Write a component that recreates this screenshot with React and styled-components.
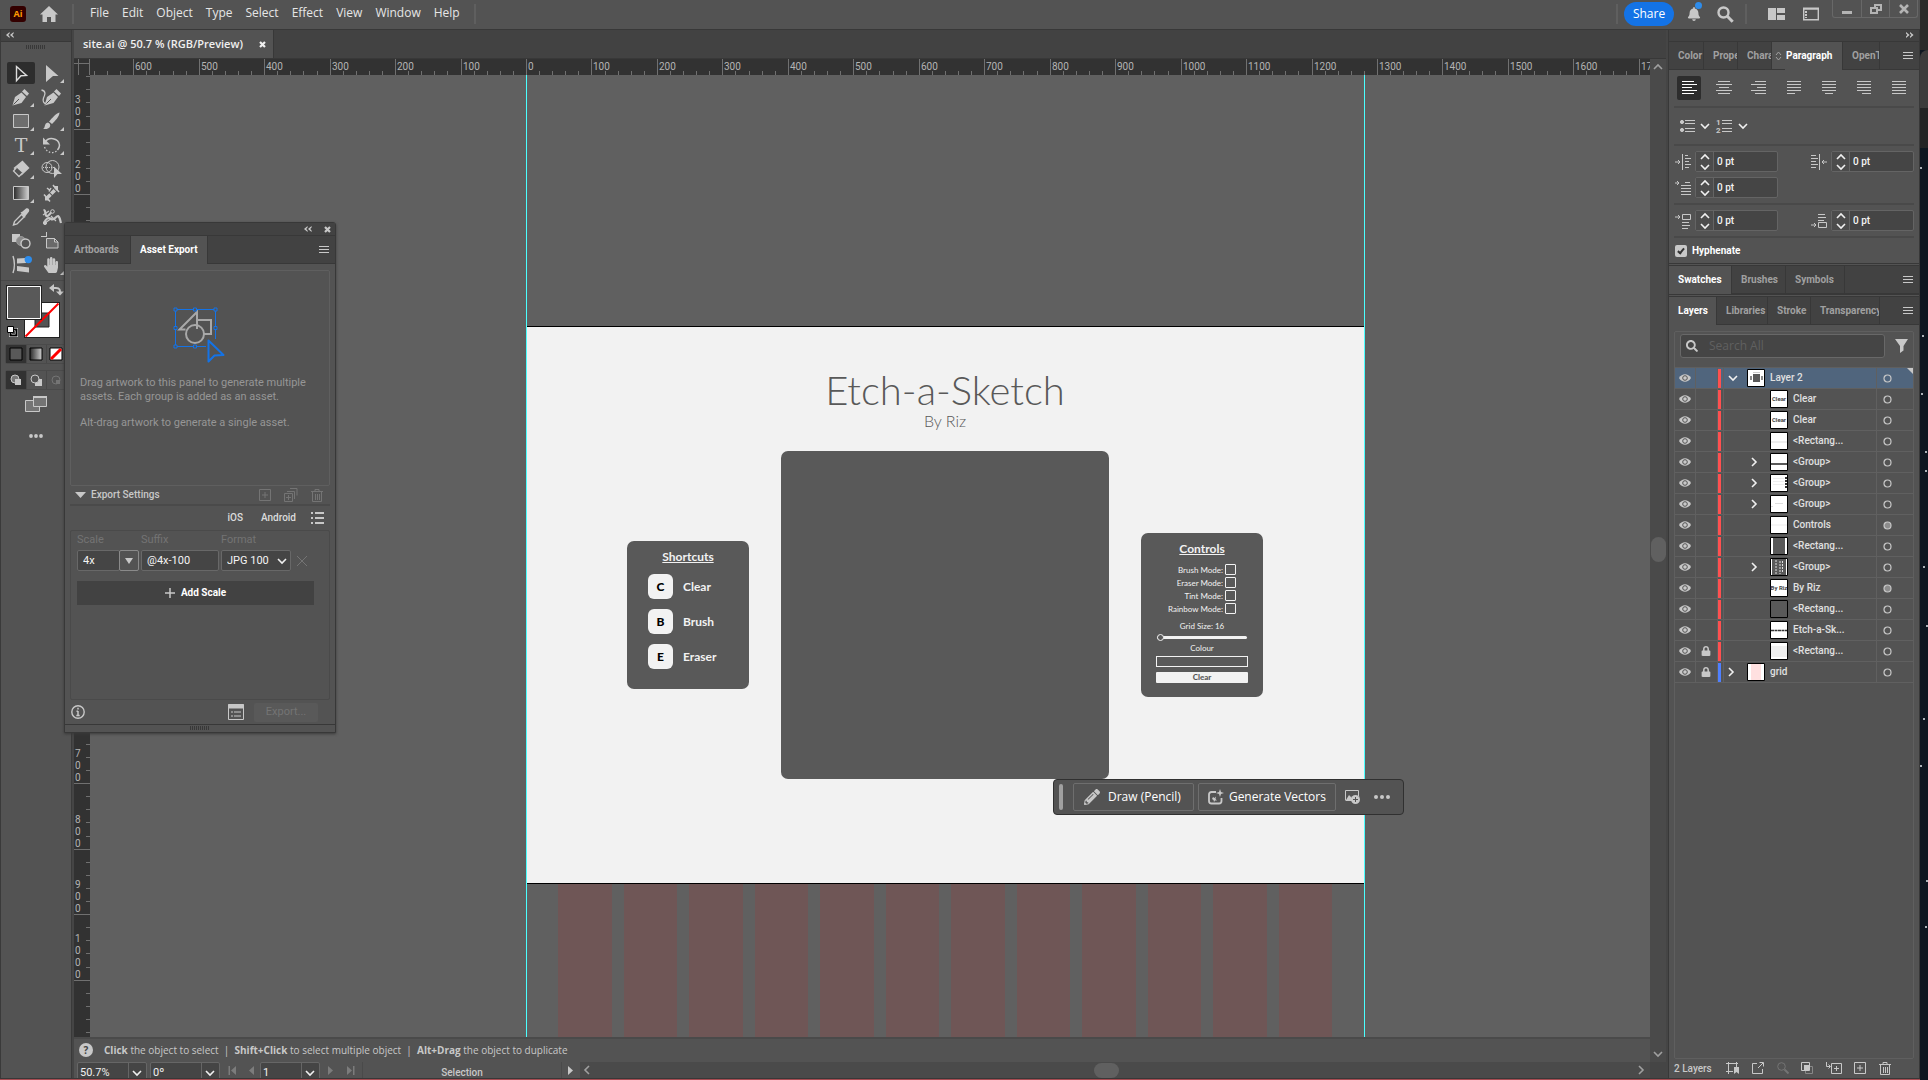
import React from 'react';
import styled, { createGlobalStyle, css } from 'styled-components';
import { FaBell, FaHandPaper, FaLock, FaPencilAlt, FaSearch } from 'react-icons/fa';

/* ---------- data ---------- */

const UNIT = 0.6546; // screen pixels per ruler unit at 50.7 %
const ORIGIN_X = 436;
const ORIGIN_Y = 251;

const menus = ['File', 'Edit', 'Object', 'Type', 'Select', 'Effect', 'View', 'Window', 'Help'];

const layers = [
    { name: 'Layer 2', depth: 0, open: true, selected: true, thumb: 'board' },
    { name: 'Clear', depth: 1, thumb: 'text', text: 'Clear' },
    { name: 'Clear', depth: 1, thumb: 'text', text: 'Clear' },
    { name: '<Rectang...', depth: 1, thumb: 'pale' },
    { name: '<Group>', depth: 1, group: true, thumb: 'slider' },
    { name: '<Group>', depth: 1, group: true, thumb: 'modes' },
    { name: '<Group>', depth: 1, group: true, thumb: 'faint' },
    { name: 'Controls', depth: 1, thumb: 'white', filled: true },
    { name: '<Rectang...', depth: 1, thumb: 'tall' },
    { name: '<Group>', depth: 1, group: true, thumb: 'keys' },
    { name: 'By Riz', depth: 1, thumb: 'text', text: 'By Riz', filled: true },
    { name: '<Rectang...', depth: 1, thumb: 'dark' },
    { name: 'Etch-a-Sk...', depth: 1, thumb: 'line' },
    { name: '<Rectang...', depth: 1, thumb: 'gray', locked: true },
    { name: 'grid', depth: 0, group: true, thumb: 'pink', locked: true, color: '#4f80ff' },
];

const alignments = [
    ['Align left', [[4, 16], [4, 19], [4, 14], [4, 19], [4, 16]]],
    ['Align center', [[6, 18], [4, 20], [7, 17], [4, 20], [6, 18]]],
    ['Align right', [[8, 19], [4, 19], [10, 19], [4, 19], [8, 19]]],
    ['Justify left', [[5, 19], [5, 19], [5, 19], [5, 19], [5, 13]]],
    ['Justify center', [[5, 19], [5, 19], [5, 19], [5, 19], [8, 16]]],
    ['Justify right', [[5, 19], [5, 19], [5, 19], [5, 19], [10, 19]]],
    ['Justify all', [[5, 19], [5, 19], [5, 19], [5, 19], [5, 19]]],
];

/* ---------- shared parts ---------- */

const GlobalStyle = createGlobalStyle`
    body {
        margin: 0;
        background: #0d1620;
        color: #dcdcdc;
        font-family: Roboto, "Open Sans", sans-serif;
        font-size: 11px;
        line-height: 14px;
    }
    *, *::before, *::after {
        box-sizing: border-box;
    }
    button, input, select {
        font: inherit;
        color: inherit;
        margin: 0;
        padding: 0;
        border: 0;
        background: none;
    }
    h1, h2, p, ul {
        margin: 0;
        padding: 0;
        font-weight: inherit;
        font-size: inherit;
        list-style: none;
    }
    svg {
        display: block;
        flex: none;
    }
`;

const Icon = ({ w = 16, h = 16, children, ...rest }) => (
    <svg width={w} height={h} viewBox={`0 0 ${w} ${h}`} fill="none" stroke="#c8c8c8" aria-hidden="true" {...rest}>
        {children}
    </svg>
);

const IconButton = styled.button`
    display: flex;
    align-items: center;
    justify-content: center;
    flex: none;
`;

const MenuLines = () => (
    <Icon w={10} h={8} shapeRendering="crispEdges">
        <path d="M0 .5h10M0 3.5h10M0 6.5h10" />
    </Icon>
);

const Chevron = ({ dir = 'down', color = '#f0f0f0' }) => {
    const d = { down: 'M1 3l4 4 4-4', up: 'M1 7l4-4 4 4', left: 'M7 1L3 5l4 4', right: 'M1 1l4 4-4 4' };
    return (
        <Icon w={10} h={10} stroke={color} strokeWidth="1.6">
            <path d={d[dir]} />
        </Icon>
    );
};

const Doubles = ({ right }) => (
    <Icon w={8} h={6} stroke="none" fill="#c8c8c8">
        {right
            ? <path d="M0 0l3.6 3L0 6V4.400l1.400-1.400L0 1.600zM4 0l3.600 3L4 6V4.400L5.400 3 4 1.600z" />
            : <path d="M3.600 0L0 3l3.600 3V4.400L2.200 3l1.400-1.400zM7.600 0L4 3l3.600 3V4.400L6.200 3l1.400-1.400z" />}
    </Icon>
);

const Grip = () => (
    <Icon w={20} h={4} stroke="#383838" shapeRendering="crispEdges">
        <path d="M.5 0v4M2.500 0v4M4.500 0v4M6.500 0v4M8.500 0v4M10.500 0v4M12.500 0v4M14.500 0v4M16.500 0v4M18.500 0v4" />
    </Icon>
);

/* ---------- frame ---------- */

const Screen = styled.div`
    display: flex;
    height: 100vh;
    overflow: hidden;
`;

const AppWindow = styled.div`
    position: relative;
    display: flex;
    flex-direction: column;
    flex: 1;
    min-width: 0;
    background: #535353;
    border-bottom: 1px solid #a84c52;
`;

const Desktop = styled.div`
    width: 8px;
    display: flex;
    flex-direction: column;
    background: #0d1620;
`;

const DesktopBand = styled.div`
    flex: none;
    height: ${({ $h }) => $h}px;
    background: ${({ $bg }) => $bg};
    border-top-left-radius: ${({ $round }) => ($round ? 8 : 0)}px;
`;

const Body = styled.div`
    flex: 1;
    min-height: 0;
    display: grid;
    grid-template-columns: 72px minmax(0, 1fr) 252px;
    column-gap: 2px;
    background: #454545;
    border-top: 1px solid #383838;
    border-bottom: 1px solid #383838;
`;

/* ---------- top bar ---------- */

const TopBar = styled.header`
    height: 29px;
    display: flex;
    align-items: center;
    padding: 0 0 1px 10px;
`;

const Logo = styled.span`
    width: 16px;
    height: 16px;
    border-radius: 3px;
    background: #330000;
    color: #ff9a00;
    font: 700 9px/16px "Open Sans", sans-serif;
    text-align: center;
    margin-right: 14px;
`;

const Rule = styled.span`
    width: 2px;
    height: 20px;
    background: #5f5f5f;
    margin: 0 ${({ $gap }) => $gap}px;
`;

const Menu = styled.nav`
    display: flex;
    gap: 13px;
    padding: 0 2px 2px;
    font: 12px/16px "Open Sans", sans-serif;
    color: #e6e6e6;
`;

const Spacer = styled.span`
    flex: 1;
`;

const Share = styled.button`
    width: 50px;
    height: 24px;
    border-radius: 12px;
    background: #1473e6;
    color: #fff;
    font: 12px/24px "Open Sans", sans-serif;
    text-align: center;
`;

const BellButton = styled(IconButton)`
    position: relative;
    width: 16px;
    margin: 0 15px 0 12px;
    color: #c8c8c8;
    font-size: 14px;

    &::after {
        content: '';
        position: absolute;
        top: -5px;
        right: 0;
        width: 7px;
        height: 7px;
        border-radius: 50%;
        background: #2d8ceb;
    }
`;

const WindowButtons = styled.div`
    align-self: flex-start;
    display: flex;
    height: 18px;
    margin: 0 2px 0 5px;
    border: 1px solid #686868;
    border-top: 0;
    border-radius: 0 0 3px 3px;
`;

const WindowButton = styled(IconButton)`
    width: 28px;

    & + & {
        border-left: 1px solid #686868;
    }
`;

const TopHeader = () => (
    <TopBar>
        <Logo>Ai</Logo>
        <IconButton aria-label="Home">
            <Icon w={18} h={16} stroke="none" fill="#c8c8c8">
                <path d="M9 0l9 8.500h-2.500V16H11v-5H7v5H2.500V8.500H0z" />
            </Icon>
        </IconButton>
        <Rule $gap={14} />
        <Menu>
            {menus.map(m => <button key={m}>{m}</button>)}
        </Menu>
        <Rule $gap={12} />
        <Spacer />
        <Rule $gap={6} />
        <Share>Share</Share>
        <BellButton aria-label="Notifications"><FaBell /></BellButton>
        <IconButton aria-label="Search">
            <Icon w={17} h={17} strokeWidth="2.400">
                <circle cx="6.500" cy="6.500" r="5" />
                <path d="M10.300 10.300l5.400 5.400" strokeWidth="3" />
            </Icon>
        </IconButton>
        <Rule $gap={11} />
        <IconButton aria-label="Arrange documents">
            <Icon w={37} h={12} stroke="none" fill="#c8c8c8">
                <path d="M10 0h8v12h-8zM19 0h8v5h-8zM19 7h8v5h-8z" />
            </Icon>
        </IconButton>
        <IconButton aria-label="Switch workspace">
            <Icon w={32} h={14}>
                <path d="M8.700 1.700h14.600v11H8.700z" strokeWidth="1.400" />
                <path d="M8 1.500h16" strokeWidth="2" />
                <path d="M11 4v7" strokeWidth="2" strokeDasharray="2 1" />
            </Icon>
        </IconButton>
        <WindowButtons>
            <WindowButton aria-label="Minimize">
                <Icon w={10} h={12} stroke="#b4b4b4" strokeWidth="3"><path d="M0 9.500h10" /></Icon>
            </WindowButton>
            <WindowButton aria-label="Restore">
                <Icon w={12} h={12} stroke="#b4b4b4" strokeWidth="2">
                    <path d="M5 5V2h6v5H8M1 5h6v5H1z" />
                </Icon>
            </WindowButton>
            <WindowButton aria-label="Close">
                <Icon w={10} h={10} stroke="#b4b4b4" strokeWidth="2.600"><path d="M1 1l8 8M9 1L1 9" /></Icon>
            </WindowButton>
        </WindowButtons>
    </TopBar>
);

/* ---------- toolbar ---------- */

const Toolbar = styled.aside`
    display: flex;
    flex-direction: column;
    background: #535353;
    border: 1px solid #3a3a3a;
    border-width: 0 1px;
`;

const PaneHead = styled.div`
    height: 12px;
    display: flex;
    align-items: center;
    justify-content: ${({ $end }) => ($end ? 'flex-end' : 'flex-start')};
    padding: 0 5px 1px 5px;
    background: #424242;
    border-bottom: 1px solid #383838;
    flex: none;
`;

const GripRow = styled.div`
    display: flex;
    justify-content: center;
    padding: 3px 0 13px;
`;

const ToolGrid = styled.div`
    display: grid;
    grid-template-columns: 28px 28px;
    gap: 2px;
    padding: 0 6px 4px;
`;

const Tool = styled.button`
    height: 22px;
    border-radius: 2px;
    background: ${({ $active }) => ($active ? '#2d2d2d' : 'none')};
`;

const g = '#c8c8c8';
const corner = <path d="M27 17v4h-4z" fill={g} stroke="none" />;
const nib = (
    <g stroke="none" fill={g}>
        <path d="M5.500 19.500L8 11l6.500-4.500 4.500 4.500-4.500 6z" />
        <path d="M15 5.500L17.500 3l4.500 4.500-2 2.500z" />
        <path d="M6.500 18.500l5.500-5.500" stroke="#535353" />
    </g>
);

const tools = [
    ['Selection', <path d="M9.500 4.500l10 9-5.500.3-4.500 5z" strokeWidth="1.400" stroke="#dcdcdc" />],
    ['Direct selection', <><path d="M9 3l12.500 11H16l-7 6z" fill={g} stroke="none" />{corner}</>],
    ['Pen', <>{nib}{corner}</>],
    ['Curvature', <><g transform="translate(2)">{nib}</g><path d="M4.500 4c5 1 3.500 5 2 8-1 3 0 6 3 5.500" strokeWidth="1.300" /></>],
    ['Rectangle', <><path d="M6.500 4.500h15v13h-15z" fill="#6e6e6e" />{corner}</>],
    ['Paintbrush', <><g fill={g} stroke="none"><path d="M22.500 2.500c0 4-4.500 8.500-7.500 11.500l-3-2.500c3-3.500 7-8 10.500-9z" /><path d="M6 19c2.500-1 1-6 5-6.500 4 1.500 3 7.500-5 6.500z" /></g>{corner}</>],
    ['Type', <><text x="14" y="18" textAnchor="middle" fontFamily="DejaVu Serif, serif" fontSize="19" fill={g} stroke="none">T</text>{corner}</>],
    ['Rotate', <><path d="M8 8.500c3-6 13.500-5 14.500 2.500 0 2-.5 3.500-2 5" strokeWidth="1.500" /><path d="M19.500 17c-4 3-9.500 2-12-4" strokeDasharray="1.500 1.800" strokeWidth="1.300" /><path d="M6 3.500v7h7z" fill={g} stroke="none" />{corner}</>],
    ['Eraser', <><path d="M15.500 2.500l7 7.500-8 7.500-8-7.500z" fill={g} stroke="none" /><path d="M9.500 9.500l-3 3.500 5.500 5.500 3.500-3.500" strokeWidth="1.300" fill="#535353" />{corner}</>],
    ['Shape builder', <><circle cx="10" cy="9.500" r="5" /><circle cx="15.500" cy="9" r="6.500" /><path d="M6 9.500h12" strokeDasharray="1 1" /><path d="M17 8.500l8 7.500h-4.500l-3.500 4z" fill={g} stroke="none" /></>],
    ['Gradient', <><defs><linearGradient id="toolGradient"><stop stopColor="#2a2a2a" /><stop offset="1" stopColor="#d0d0d0" /></linearGradient></defs><path d="M6.500 4.500h15v13h-15z" fill="url(#toolGradient)" />{corner}</>],
    ['Width', <><path d="M10 16l9-9" strokeWidth="3.500" strokeDasharray="5 1" /><path d="M7 12.500l6 7M16 3l6 7" strokeWidth="1.500" /><path d="M8 18.500v-5l5 5zM21 4v5l-5-5z" fill={g} stroke="none" /><path d="M10 6l2.500 2M12 9.500l2-3.500" strokeWidth="1.500" /></>],
    ['Eyedropper', <><path d="M6.500 19l1-3.500 7-7 2.500 2.500-7 7z" strokeWidth="1.400" /><path d="M13.500 6.500l2-1 3.500-3c2-1 4 1 3 3L18.500 10l-.5 2z" fill={g} stroke="none" /></>],
    ['Puppet warp', <><path d="M6.500 4c3 0 1 5 3 6 3 1 3-4 7-5M7 17c2-5 5-6 7-4 3 2 5-3 7-3 2 1 2 4 3 7" strokeWidth="2.200" /><path d="M8 17l7-5M6 9l6-4M14 10l5 5" strokeWidth="1.200" /><circle cx="15.500" cy="5.500" r="1.800" fill="#535353" /><circle cx="8" cy="17" r="1.600" fill={g} /></>],
    ['Blend', <><path d="M5 4h8v8H5z" fill={g} stroke="none" /><circle cx="14" cy="11" r="4.500" fill="#8a8a8a" stroke="#9a9a9a" /><circle cx="18.500" cy="13.500" r="4.500" fill="#535353" strokeWidth="1.400" /></>],
    ['Artboard', <path d="M4 6.500h5M9.500 2v5M9.500 8.500h8l3.500 3.500v6H9.500zM17.500 8.500V12h3.500" fill="#6a6a6a" />],
    ['Intertwine', <><path d="M6 2c2 6 2 11 0 17" strokeWidth="1.400" /><path d="M10 4.500l9-.5v5l-9 .5zM10 12l12 1.500v5L10 17z" fill={g} stroke="none" /><circle cx="21.300" cy="5.600" r="3.700" fill="#2d8ceb" stroke="none" /></>],
    ['Hand', <><FaHandPaper x="6" y="3" size={16} color={g} />{corner}</>],
];

const SwatchArea = styled.div`
    border-top: 1px solid #484848;
    padding: 4px 0 0 6px;
`;

const ModeRow = styled.div`
    display: flex;
    margin: 6px 0 0 4px;
    border: 1px solid #4a4a4a;
    border-right: 0;
    border-radius: 3px;
`;

const Mode = styled.button`
    width: 20px;
    height: 18px;
    display: flex;
    align-items: center;
    justify-content: center;
    background: ${({ $active }) => ($active ? '#323232' : 'none')};

    & + & {
        border-left: 1px solid #484848;
        padding-right: 2px;
    }
`;

const ToolFooter = styled.div`
    display: flex;
    flex-direction: column;
    align-items: center;
    gap: 22px;
    padding-top: 6px;
`;

const Tools = () => (
    <Toolbar>
        <PaneHead><Doubles /></PaneHead>
        <GripRow><Grip /></GripRow>
        <ToolGrid>
            {tools.map(([name, art], i) => (
                <Tool key={name} aria-label={name} $active={i === 0}>
                    <Icon w={28} h={22}>{art}</Icon>
                </Tool>
            ))}
        </ToolGrid>
        <SwatchArea>
            <Icon w={58} h={53} stroke="none" overflow="visible">
                <path d="M17 17h36v36H17z" fill="#222" />
                <path d="M18 18h34v34H18zM28 28v14h14V28z" fill="#fff" fillRule="evenodd" />
                <path d="M28 28h14v14H28z" fill="#535353" stroke="#222" />
                <path d="M18.500 51.500l33-33" stroke="#f00" strokeWidth="2" />
                <path d="M-1 0h36v35H-1z" fill="#222" />
                <path d="M.5 1.500h33v32H.5z" fill="#595959" stroke="#fff" />
                <path d="M45 3h4c4 0 4 2 4 5" stroke={g} strokeWidth="2" />
                <path d="M42 3l5-4v8zM49 6.500h8l-4 4z" fill={g} />
                <path d="M3.500 44.500h6v6h-6z" fill="#535353" stroke="#fff" strokeWidth="3" />
                <path d="M3.500 44.500h6v6h-6z" stroke="#000" strokeWidth="2" />
                <path d="M.5 41.500h6v6h-6z" fill="#fff" stroke="#000" />
            </Icon>
        </SwatchArea>
        <ModeRow>
            <Mode aria-label="Color" $active>
                <Icon w={14} h={14}><path d="M1 1h12v12H1z" fill="#595959" stroke="#000" /></Icon>
            </Mode>
            <Mode aria-label="Gradient fill">
                <Icon w={14} h={14}><path d="M1 1h12v12H1z" fill="url(#toolGradient)" stroke="#000" /></Icon>
            </Mode>
            <Mode aria-label="None">
                <Icon w={14} h={14}>
                    <path d="M1 1h12v12H1z" fill="#fff" stroke="#000" />
                    <path d="M2 12L12 2" stroke="#f00" strokeWidth="3" />
                </Icon>
            </Mode>
        </ModeRow>
        <ModeRow>
            <Mode aria-label="Draw normal" $active>
                <Icon w={14} h={14}><circle cx="6" cy="6" r="4" fill="#777" /><path d="M6 6h6v6H6z" fill={g} stroke="none" /></Icon>
            </Mode>
            <Mode aria-label="Draw behind">
                <Icon w={14} h={14}><path d="M6 6h7v7H6z" fill={g} stroke="none" /><circle cx="6" cy="6" r="4" fill="#535353" /></Icon>
            </Mode>
            <Mode aria-label="Draw inside">
                <Icon w={14} h={14} stroke="#747474"><circle cx="7" cy="7" r="4" /><path d="M7 7h4v4H7z" fill="#747474" stroke="none" /></Icon>
            </Mode>
        </ModeRow>
        <ToolFooter>
            <IconButton aria-label="Screen mode">
                <Icon w={22} h={16}>
                    <path d="M.5 4.500h14v11H.5z" fill="#747474" />
                    <path d="M8.500.5h13v10h-13z" fill="#747474" />
                    <path d="M8 1h14" strokeWidth="2" />
                </Icon>
            </IconButton>
            <IconButton aria-label="Edit toolbar">
                <Icon w={14} h={4} stroke="none" fill={g}>
                    <circle cx="2" cy="2" r="1.900" /><circle cx="7" cy="2" r="1.900" /><circle cx="12" cy="2" r="1.900" />
                </Icon>
            </IconButton>
        </ToolFooter>
    </Toolbar>
);

/* ---------- document ---------- */

const Doc = styled.main`
    display: grid;
    grid-template: 29px 16px minmax(0, 1fr) 25px 16px / 16px minmax(0, 1fr) 16px;
    min-width: 0;
    min-height: 0;
`;

const DocTabs = styled.div`
    grid-column: 1 / -1;
    background: #424242;
    border-bottom: 1px solid #383838;
    display: flex;
`;

const DocTab = styled.div`
    display: flex;
    align-items: center;
    gap: 16px;
    padding: 0 7px 0 9px;
    background: #535353;
    border-right: 1px solid #383838;
    color: #f0f0f0;
    font-family: "Open Sans", sans-serif;
    font-weight: 600;
`;

const RulerBox = styled.div`
    background: #323232;
    overflow: hidden;
    min-width: 0;
    min-height: 0;

    text {
        fill: #b4b4b4;
        stroke: none;
        font-size: 10px;
    }
`;

const range = (from, to) => Array.from({ length: to - from + 1 }, (_, i) => from + i);

const TopRuler = () => (
    <RulerBox>
        <svg width="100%" height="16" stroke="#707070" shapeRendering="crispEdges">
            {range(-33, 140).map(i => {
                const x = Math.round(ORIGIN_X + i * 20 * UNIT) + 0.5;
                return <path key={i} d={`M${x} ${i % 5 ? 12 : 0}V16`} />;
            })}
            {range(-6, 17).map(i => (
                <text key={i} x={Math.round(ORIGIN_X + i * 100 * UNIT) + 2} y="11">{Math.abs(i * 100)}</text>
            ))}
        </svg>
    </RulerBox>
);

const SideRuler = () => (
    <RulerBox>
        <svg width="16" height="100%" stroke="#707070" shapeRendering="crispEdges">
            {range(-19, 70).map(i => {
                const y = Math.round(ORIGIN_Y + i * 20 * UNIT) - 0.5;
                return <path key={i} d={`M${i % 5 ? 12 : 0} ${y}H16`} />;
            })}
            {range(-3, 10).map(i => {
                const digits = String(Math.abs(i * 100)).split('');
                const y = Math.round(ORIGIN_Y + i * 100 * UNIT) - 3;
                return digits.map((d, n) => (
                    <text key={`${i}-${n}`} x="1" y={y - (digits.length - 1 - n) * 12}>{d}</text>
                ));
            })}
        </svg>
    </RulerBox>
);

const Canvas = styled.div`
    position: relative;
    overflow: hidden;
    background: #606060;
`;

const Guide = styled.span`
    position: absolute;
    top: 0;
    bottom: 0;
    left: ${({ $x }) => $x}px;
    width: 1px;
    background: #4affff;
`;

const GridColumns = styled.div`
    position: absolute;
    top: 809px;
    bottom: 0;
    left: 436px;
    width: 838px;
    padding: 0 32px;
    display: grid;
    grid-template-columns: repeat(12, 1fr);
    column-gap: 12px;

    span {
        background: #6f5656;
    }
`;

const Artboard = styled.section`
    position: absolute;
    top: 251px;
    left: 436px;
    width: 838px;
    height: 558px;
    padding-top: 41px;
    background: #f2f2f2;
    border: 1px solid #000;
    border-width: 1px 0;
    color: #595959;
    font-family: Lato, "Open Sans", sans-serif;
    text-align: center;
`;

const ArtTitle = styled.h1`
    font-size: 40px;
    font-weight: 300;
    line-height: 44px;
`;

const ArtAuthor = styled.p`
    font-size: 16px;
    font-weight: 300;
    line-height: 18px;
`;

const ArtRow = styled.div`
    display: flex;
    align-items: center;
    justify-content: center;
    gap: 32px;
    margin-top: 21px;
`;

const Pad = styled.div`
    width: 328px;
    height: 328px;
    border-radius: 7px;
    background: #595959;
`;

const Card = styled.div`
    width: 122px;
    height: ${({ $tall }) => ($tall ? 164 : 148)}px;
    padding: 9px 15px;
    border-radius: 7px;
    background: #595959;
    color: #f2f2f2;
`;

const CardTitle = styled.h2`
    font-size: 12px;
    line-height: 14px;
    font-weight: 700;
    text-decoration: underline;
`;

const Shortcut = styled.p`
    display: flex;
    align-items: center;
    gap: 10px;
    margin: 10px 0 0 6px;
    font-size: 12px;
    font-weight: 700;
`;

const Key = styled.kbd`
    width: 25px;
    border-radius: 6px;
    background: #f2f2f2;
    color: #000;
    font: 900 12px/25px Lato, sans-serif;
    text-align: center;
`;

const ModeList = styled.div`
    display: flex;
    flex-direction: column;
    align-items: flex-end;
    margin: 7px 12px 6px 0;
    font-size: 8px;
`;

const ModeLabel = styled.label`
    display: flex;
    align-items: center;
    gap: 2px;
    height: 13px;
    white-space: nowrap;
`;

const ArtCheck = styled.input`
    appearance: none;
    width: 11px;
    height: 11px;
    border: 1px solid #f2f2f2;
    border-radius: 1px;
`;

const ArtLabel = styled.label`
    display: block;
    font-size: 8px;
    line-height: 10px;
`;

const ArtSlider = styled.input`
    appearance: none;
    display: block;
    width: 90px;
    height: 7px;
    margin: 3px 1px 2px;

    &::-webkit-slider-runnable-track {
        height: 3px;
        border-radius: 2px;
        background: #f2f2f2;
    }
    &::-webkit-slider-thumb {
        appearance: none;
        width: 7px;
        height: 7px;
        margin-top: -2px;
        border: 1px solid #f2f2f2;
        border-radius: 50%;
        background: #595959;
    }
`;

const ArtField = styled.input`
    display: block;
    width: 100%;
    height: 11px;
    margin: 3px 0 5px;
    border: 1px solid #f2f2f2;
`;

const ArtButton = styled.button`
    display: block;
    width: 100%;
    border-radius: 1px;
    background: #f2f2f2;
    color: #595959;
    font-size: 8px;
    line-height: 11px;
    font-weight: 900;
`;

const Artwork = () => (
    <Artboard>
        <ArtTitle>Etch-a-Sketch</ArtTitle>
        <ArtAuthor>By Riz</ArtAuthor>
        <ArtRow>
            <Card>
                <CardTitle>Shortcuts</CardTitle>
                <Shortcut><Key>C</Key>Clear</Shortcut>
                <Shortcut><Key>B</Key>Brush</Shortcut>
                <Shortcut><Key>E</Key>Eraser</Shortcut>
            </Card>
            <Pad />
            <Card $tall>
                <CardTitle>Controls</CardTitle>
                <ModeList>
                    {['Brush', 'Eraser', 'Tint', 'Rainbow'].map(m => (
                        <ModeLabel key={m}>{m} Mode:<ArtCheck type="checkbox" /></ModeLabel>
                    ))}
                </ModeList>
                <ArtLabel htmlFor="gridSize">Grid Size: 16</ArtLabel>
                <ArtSlider id="gridSize" type="range" min="16" max="100" defaultValue="16" />
                <ArtLabel htmlFor="colour">Colour</ArtLabel>
                <ArtField id="colour" type="text" />
                <ArtButton>Clear</ArtButton>
            </Card>
        </ArtRow>
    </Artboard>
);

const ContextBar = styled.div`
    position: absolute;
    top: 704px;
    left: 963px;
    display: flex;
    align-items: center;
    height: 36px;
    padding: 0 12px 0 5px;
    border: 1px solid #303030;
    border-radius: 4px;
    background: #535353;
    font: 12px/16px "Open Sans", sans-serif;
    color: #fff;

    &::before {
        content: '';
        width: 4px;
        height: 26px;
        margin-right: 10px;
        border-radius: 2px;
        background: #a0a0a0;
    }
`;

const ContextButton = styled.button`
    display: flex;
    align-items: center;
    gap: ${({ $tight }) => ($tight ? 5 : 8)}px;
    height: 28px;
    padding: 0 ${({ $tight }) => ($tight ? 9 : 12)}px 0 ${({ $tight }) => ($tight ? 9 : 10)}px;
    margin-right: 4px;
    border: 1px solid #6e6e6e;
    border-radius: 2px;

    svg {
        color: #c8c8c8;
    }
`;

const VScroll = styled.div`
    grid-row: 2 / 5;
    grid-column: 3;
    display: flex;
    flex-direction: column;
    align-items: center;
    justify-content: space-between;
    padding: 3px 0;
    background: #4a4a4a;
`;

const VThumbShift = styled.span`
    padding-bottom: 23px;
`;

const Thumb = styled.span`
    width: ${({ $w }) => $w}px;
    height: ${({ $h }) => $h}px;
    border-radius: 8px;
    background: #606060;
`;

const Status = styled.p`
    grid-column: 1 / 3;
    display: flex;
    align-items: center;
    padding: 0 0 1px 5px;
    border-top: 2px solid #4a4a4a;
    background: #535353;
    color: #c8c8c8;
    font-family: "Open Sans", sans-serif;
    font-size: 10px;
    font-weight: 500;
    white-space: pre;
`;

const Help = styled.span`
    width: 14px;
    height: 14px;
    margin-right: 11px;
    border-radius: 50%;
    background: #c8c8c8;
    color: #444;
    font-weight: 700;
    text-align: center;
`;

const BottomBar = styled.div`
    grid-column: 1 / 3;
    display: flex;
    overflow: hidden;
    padding-left: 3px;
    background: #535353;
`;

const Combo = styled.label`
    flex: none;
    display: flex;
    height: 21px;
    width: ${({ $w }) => $w}px;
    margin-right: ${({ $gap }) => $gap}px;
    border: 1px solid #666;
    border-radius: 2px;
    background: #454545;
    color: #f0f0f0;

    input {
        flex: 1;
        min-width: 0;
        padding-left: 2px;
    }
    button {
        width: 18px;
        padding-left: 3px;
        border-left: 1px solid #666;
    }
`;

const Step = styled(IconButton)`
    width: ${({ $w }) => $w}px;
`;

const StepIcon = ({ end, back }) => (
    <Icon w={8} h={9} stroke="none" fill="#7c7c7c">
        <g transform={back ? 'translate(8) scale(-1 1)' : undefined}>
            <path d="M0 0l5 4.500L0 9z" />
            {end && <path d="M6 0h1.500v9H6z" />}
        </g>
    </Icon>
);

const ToolName = styled.span`
    width: 200px;
    padding-top: 2px;
    border: 1px solid #4a4a4a;
    border-width: 0 1px;
    color: #c8c8c8;
    font-size: 10px;
    font-weight: 500;
    line-height: 18px;
    text-align: center;
`;

const HScroll = styled.div`
    flex: 1;
    display: flex;
    align-items: center;
    justify-content: space-between;
    padding: 0 2px;
    background: #4a4a4a;
`;

const ThumbShift = styled.span`
    padding-right: 18px;
`;

const Document = () => (
    <Doc>
        <DocTabs>
            <DocTab>
                site.ai @ 50.7 % (RGB/Preview)
                <IconButton aria-label="Close document">
                    <Icon w={7} h={7} strokeWidth="2.200" stroke="#f0f0f0"><path d="M1 1l5 5M6 1L1 6" /></Icon>
                </IconButton>
            </DocTab>
        </DocTabs>
        <RulerBox>
            <svg width="16" height="16" stroke="#707070" shapeRendering="crispEdges">
                <path d="M4.500 0v16M0 4.500h16" /><path d="M15.500 0v16" />
            </svg>
        </RulerBox>
        <TopRuler />
        <VScroll>
            <Chevron dir="up" color="#a0a0a0" />
            <VThumbShift><Thumb as="div" $w={15} $h={25} /></VThumbShift>
            <Chevron color="#a0a0a0" />
        </VScroll>
        <SideRuler />
        <Canvas>
            <Artwork />
            <GridColumns>{range(1, 12).map(i => <span key={i} />)}</GridColumns>
            <Guide $x={436} />
            <Guide $x={1274} />
            <ContextBar>
                <ContextButton><FaPencilAlt size={16} />Draw (Pencil)</ContextButton>
                <ContextButton $tight>
                    <Icon w={16} h={16} strokeWidth="1.800">
                        <path d="M8 3H3.500C2 3 1 4 1 5.500V12c0 1.500 1 2.500 2.500 2.500H11c1.500 0 2.500-1 2.500-2.500V9" />
                        <path d="M12 0l1 3 3 1-3 1-1 3-1-3-3-1 3-1zM5 8l1.500 1L8 7.500 7.500 10 9 11.500H7L6 13l-.5-2L4 10z" fill={g} stroke="none" />
                    </Icon>
                    Generate Vectors
                </ContextButton>
                <IconButton aria-label="Place image">
                    <Icon w={26} h={16}>
                        <path d="M5.500 11.500V1.500h13V7" />
                        <path d="M6 11l3-5 3 3 2-1-2 4H6z" fill={g} stroke="none" />
                        <circle cx="15.500" cy="10.500" r="4.500" fill={g} stroke="none" />
                        <path d="M15.500 8v5M13 10.500h5" stroke="#535353" />
                    </Icon>
                </IconButton>
                <IconButton aria-label="More options">
                    <Icon w={25} h={4} stroke="none" fill={g}>
                        <circle cx="10" cy="2" r="2" /><circle cx="16" cy="2" r="2" /><circle cx="22" cy="2" r="2" />
                    </Icon>
                </IconButton>
            </ContextBar>
        </Canvas>
        <Status>
            <Help>?</Help>
            <b>Click</b> the object to select  |  <b>Shift+Click</b> to select multiple object  |  <b>Alt+Drag</b> the object to duplicate
        </Status>
        <BottomBar>
            <Combo $w={70} $gap={3}>
                <input defaultValue="50.7%" aria-label="Zoom" />
                <button aria-label="Zoom list"><Chevron /></button>
            </Combo>
            <Combo $w={70} $gap={4}>
                <input defaultValue="0º" aria-label="Rotation" />
                <button aria-label="Rotation list"><Chevron /></button>
            </Combo>
            <Step $w={16} aria-label="First artboard"><StepIcon end back /></Step>
            <Step $w={20} aria-label="Previous artboard"><StepIcon back /></Step>
            <Combo $w={60} $gap={4}>
                <input defaultValue="1" aria-label="Artboard" />
                <button aria-label="Artboard list"><Chevron /></button>
            </Combo>
            <Step $w={16} aria-label="Next artboard"><StepIcon /></Step>
            <Step $w={22} aria-label="Last artboard"><StepIcon end /></Step>
            <ToolName>Selection</ToolName>
            <Step $w={18} aria-label="Status options">
                <Icon w={6} h={9} stroke="none" fill={g}><path d="M0 0l5 4.500L0 9z" /></Icon>
            </Step>
            <HScroll>
                <Chevron dir="left" color="#a0a0a0" />
                <ThumbShift><Thumb as="div" $w={25} $h={15} /></ThumbShift>
                <Chevron dir="right" color="#a0a0a0" />
            </HScroll>
        </BottomBar>
    </Doc>
);

/* ---------- tabbed panels ---------- */

const TabBar = styled.div`
    display: flex;
    flex: none;
    height: 28px;
    background: #424242;
    border-bottom: 1px solid #383838;
`;

const Tab = styled.button`
    width: ${({ $w }) => $w}px;
    height: 28px;
    padding: 0 0 1px 9px;
    overflow: hidden;
    border-right: 1px solid #383838;
    color: #a0a0a0;
    font-size: 10px;
    font-weight: 700;
    text-align: left;
    white-space: nowrap;
    ${({ $active }) => $active && css`
        background: #535353;
        color: #fff;
    `}
`;

const TabMenu = styled(IconButton)`
    margin-left: auto;
    padding-right: 6px;
`;

const Tabs = ({ items, active }) => (
    <TabBar>
        {items.map(([name, w]) => (
            <Tab key={name} $w={w} $active={name === active}>{name}</Tab>
        ))}
        <TabMenu aria-label={`${active} menu`}><MenuLines /></TabMenu>
    </TabBar>
);

/* ---------- asset export ---------- */

const Floating = styled.section`
    position: absolute;
    top: 222px;
    left: 64px;
    width: 272px;
    height: 511px;
    display: flex;
    flex-direction: column;
    border: 1px solid #383838;
    border-radius: 3px 3px 0 0;
    background: #535353;
    box-shadow: 0 1px 3px #3a3a3a;
`;

const FloatHead = styled(PaneHead)`
    gap: 12px;
    height: 13px;
    padding: 0 4px 0 0;
`;

const DropZone = styled.div`
    flex: none;
    height: 216px;
    margin: 6px 5px 0;
    padding: 37px 9px 0;
    border: 1px solid #5f5f5f;
    border-radius: 2px;
    color: #969696;

    p {
        margin-bottom: 12px;
    }
    svg {
        margin: 0 auto 12px 95px;
    }
`;

const SettingsHead = styled.div`
    display: flex;
    align-items: center;
    gap: 5px;
    height: 20px;
    margin: 0 5px;
    padding: 0 7px 0 5px;
    border-bottom: 2px solid #4a4a4a;
    color: #c8c8c8;
    font-size: 10px;
    font-weight: 500;
`;

const SettingsIcons = styled.div`
    display: flex;
    align-items: center;
    gap: 13px;
    margin-left: auto;
`;

const Presets = styled.div`
    display: flex;
    align-items: center;
    justify-content: flex-end;
    gap: 15px;
    height: 24px;
    padding-right: 11px;
    font-size: 10px;
    font-weight: 500;

    button + button {
        margin-left: 3px;
    }
`;

const ScaleBox = styled.div`
    flex: 1;
    margin: 0 5px;
    padding: 1px 15px 0 6px;
    border: 1px solid #4a4a4a;
    border-radius: 2px;
`;

const ScaleRow = styled.div`
    display: flex;
    align-items: flex-end;
    gap: 2px;
`;

const ScaleField = styled.label`
    width: ${({ $w }) => $w}px;
    color: #747474;
    line-height: 16px;

    input, select {
        display: block;
        width: 100%;
        height: 21px;
        margin-top: 2px;
        padding-left: 5px;
        border: 1px solid #686868;
        border-radius: 2px;
        background: #454545;
        color: #f4f4f4;
    }
    select {
        appearance: none;
    }
`;

const SelectWrap = styled.span`
    position: relative;
    display: block;

    svg {
        position: absolute;
        right: 4px;
        top: 6px;
    }
`;

const DropButton = styled(IconButton)`
    width: 20px;
    height: 21px;
    margin-left: -3px;
    border: 1px solid #8a8a8a;
    border-radius: 2px;
`;

const AddScale = styled.button`
    display: flex;
    align-items: center;
    justify-content: center;
    gap: 6px;
    width: 100%;
    height: 24px;
    margin-top: 10px;
    background: #424242;
    color: #fff;
    font-size: 10px;
    font-weight: 700;
`;

const ExportRow = styled.div`
    display: flex;
    align-items: center;
    gap: 10px;
    height: 24px;
    padding: 0 17px 0 6px;
`;

const ExportButton = styled.button`
    width: 64px;
    height: 19px;
    border-radius: 2px;
    background: #595959;
    color: #747474;
`;

const FloatFoot = styled.div`
    display: flex;
    justify-content: center;
    height: 8px;
    padding-top: 1px;
    border-top: 1px solid #383838;
`;

const AssetExport = () => (
    <Floating>
        <FloatHead $end>
            <Doubles />
            <Icon w={7} h={7} strokeWidth="2.200"><path d="M1 1l5 5M6 1L1 6" /></Icon>
        </FloatHead>
        <Tabs items={[['Artboards', 66], ['Asset Export', 77]]} active="Asset Export" />
        <DropZone>
            <Icon w={52} h={56} stroke="#1473e6" overflow="visible">
                <g stroke="#a8a8a8" strokeWidth="2">
                    <path d="M22 21V4L4.500 21.500h6M22 12h14v14h-7" />
                    <circle cx="20" cy="26" r="9" />
                </g>
                <path d="M40.500 31V1.500h-40v37H31" />
                <path d="M-1 0h3v3h-3zM18.500 0h3v3h-3zM39 0h3v3h-3zM-1 18.500h3v3h-3zM39 18.500h3v3h-3zM-1 37h3v3h-3zM18.500 37h3v3h-3z" fill="#535353" />
                <path d="M33.500 32.500l15 14.500-9 .5-6 6z" strokeWidth="2" strokeLinejoin="round" />
            </Icon>
            <p>Drag artwork to this panel to generate multiple assets. Each group is added as an asset.</p>
            <p>Alt-drag artwork to generate a single asset.</p>
        </DropZone>
        <SettingsHead>
            <Icon w={11} h={6} stroke="none" fill={g}><path d="M0 0h11L5.500 6z" /></Icon>
            Export Settings
            <SettingsIcons>
                <Icon w={12} h={12} stroke="#747474"><path d="M.5.5h11v11H.5zM6 3v6M3 6h6" /></Icon>
                <Icon w={14} h={14} stroke="#747474"><path d="M.5 5.500h8v8h-8zM4.500 7v5M2 9.500h5M3 3.500h7.500V11M6 .5h7v7" /></Icon>
                <Icon w={12} h={13} stroke="#747474"><path d="M0 2.500h12M4 2V.5h4V2M1.500 3v9.500h9V3M4.500 5v6M6.500 5v6M8.500 5v6" /></Icon>
            </SettingsIcons>
        </SettingsHead>
        <Presets>
            <button>iOS</button>
            <button>Android</button>
            <Icon w={13} h={12} strokeWidth="2"><path d="M0 1h2M4 1h9M0 6h2M4 6h9M0 11h2M4 11h9" /></Icon>
        </Presets>
        <ScaleBox>
            <ScaleRow>
                <ScaleField $w={43}>Scale<input defaultValue="4x" /></ScaleField>
                <DropButton aria-label="Scale presets">
                    <Icon w={8} h={6} stroke="none" fill={g}><path d="M0 0h8L4 6z" /></Icon>
                </DropButton>
                <ScaleField $w={78}>Suffix<input defaultValue="@4x-100" /></ScaleField>
                <ScaleField $w={70}>
                    Format
                    <SelectWrap>
                        <select defaultValue="JPG 100"><option>JPG 100</option></select>
                        <Chevron />
                    </SelectWrap>
                </ScaleField>
                <IconButton aria-label="Remove scale">
                    <Icon w={18} h={20} stroke="#747474"><path d="M4 5l10 10M14 5L4 15" /></Icon>
                </IconButton>
            </ScaleRow>
            <AddScale>
                <Icon w={10} h={10} strokeWidth="1.500"><path d="M5 0v10M0 5h10" /></Icon>
                Add Scale
            </AddScale>
        </ScaleBox>
        <ExportRow>
            <Icon w={14} h={14} strokeWidth="1.400">
                <circle cx="7" cy="7" r="6.200" />
                <path d="M7 2.800v1.800M7 6v4.500M5.500 6.200H7M5.300 10.500h3.400" strokeWidth="1.500" />
            </Icon>
            <Spacer />
            <Icon w={16} h={16}>
                <path d="M.5.5h15v15H.5z" /><path d="M0 2.500h16" strokeWidth="4" />
                <path d="M3 8h2M6 8h7M3 12h2M6 12h7" />
            </Icon>
            <ExportButton disabled>Export...</ExportButton>
        </ExportRow>
        <FloatFoot><Grip /></FloatFoot>
    </Floating>
);

/* ---------- right dock ---------- */

const Dock = styled.aside`
    display: flex;
    flex-direction: column;
    min-height: 0;
    background: #535353;
    border: 1px solid #383838;
    border-width: 0 1px;
`;

const Gap = styled.div`
    flex: none;
    height: ${({ $h }) => $h}px;
    border: 1px solid #383838;
    border-width: 1px 0;
`;

const Section = styled.div`
    flex: none;
    display: flex;
    align-items: center;
    justify-content: ${({ $spread }) => ($spread ? 'space-between' : 'flex-start')};
    gap: ${({ $gap }) => $gap || 0}px;
    height: ${({ $h }) => $h}px;
    margin: 0 5px;
    padding: ${({ $pad }) => $pad || '0'};
    border-bottom: ${({ $line }) => ($line ? 2 : 0)}px solid #494949;
`;

const AlignButton = styled.button`
    width: 24px;
    height: 24px;
    border-radius: 2px;
    background: ${({ $active }) => ($active ? '#2d2d2d' : 'none')};
`;

const PointLabel = styled.label`
    display: flex;
    align-items: center;
    gap: 4px;
`;

const PointBox = styled.span`
    display: flex;
    width: 83px;
    height: 21px;
    border: 1px solid #646464;
    border-radius: 2px;
    background: #454545;

    > span {
        display: flex;
        flex-direction: column;
        align-items: center;
        width: 18px;
        border-right: 1px solid #646464;
        background: #4c4c4c;
    }
    input {
        flex: 1;
        min-width: 0;
        padding-left: 3px;
        color: #f4f4f4;
        font-size: 10px;
        font-weight: 500;
    }
`;

const indentIcons = {
    'Left indent': 'M0 8h5M3 6l2 2-2 2M7.500 0v16M10 1.500h3M10 4.500h6M10 7.500h4M10 10.500h6M10 13.500h4',
    'Right indent': 'M16 8h-5M13 6l-2 2 2 2M8.500 0v16M0 1.500h5M0 4.500h7M0 7.500h5M0 10.500h7M0 13.500h5',
    'First line indent': 'M0 3h4M2 1l2 2-2 2M10 2.500h5M6 5.500h10M6 8.500h10M6 11.500h10M6 14.500h10',
    'Space before': 'M0 4h5M3 2l2 2-2 2M7.500 1.500h8v5h-8zM7 9.500h7M7 12.500h8M7 15.500h6',
    'Space after': 'M0 12h5M3 10l2 2-2 2M7.500 9.500h8v5h-8zM7 1.500h7M7 4.500h8M7 7.500h6',
};

const PointField = ({ name }) => (
    <PointLabel>
        <Icon><path d={indentIcons[name]} /></Icon>
        <PointBox>
            <span><Chevron dir="up" /><Chevron /></span>
            <input defaultValue="0 pt" aria-label={name} />
        </PointBox>
    </PointLabel>
);

const Hyphenate = styled.label`
    display: flex;
    align-items: center;
    gap: 5px;
    color: #fff;
    font-size: 10px;
    font-weight: 700;

    input {
        appearance: none;
        width: 12px;
        height: 12px;
        border-radius: 2px;
        background: #c8c8c8;
        display: grid;
        place-items: center;
    }
    input:checked::after {
        content: '';
        width: 4px;
        height: 7px;
        border: solid #333;
        border-width: 0 2px 2px 0;
        transform: rotate(40deg);
    }
`;

const SortMark = styled.span`
    flex: none;
    width: 13px;
    display: flex;
    align-items: center;
    justify-content: center;
    background: #535353;

    & + button {
        padding-left: 1px;
    }
`;

const LayerPanel = styled.div`
    flex: 1;
    min-height: 0;
    margin: 6px 5px 0;
    border: 1px solid #5f5f5f;
    border-radius: 2px;
`;

const SearchRow = styled.div`
    display: flex;
    align-items: center;
    gap: 10px;
    height: 36px;
    padding: 0 5px 7px;
    border-bottom: 1px solid #5f5f5f;
`;

const SearchBox = styled.label`
    flex: 1;
    display: flex;
    align-items: center;
    gap: 11px;
    height: 24px;
    padding-left: 5px;
    border: 1px solid #686868;
    border-radius: 3px;
    background: #454545;
    color: #c8c8c8;

    input {
        min-width: 0;
        font: 12px/16px "Open Sans", sans-serif;
    }
    input::placeholder {
        color: #606060;
    }
`;

const LayerRow = styled.li`
    display: flex;
    height: 21px;
    border-bottom: 1px solid #606060;
    background: ${({ $selected }) => ($selected ? '#50657d' : 'none')};
    color: #e0e0e0;
`;

const LayerCell = styled.span`
    flex: none;
    width: ${({ $w }) => $w}px;
    display: flex;
    align-items: center;
    justify-content: center;
    padding-right: 1px;
    border-right: 1px solid #606060;
`;

const LayerColor = styled.span`
    flex: none;
    width: 3px;
    margin: 1px 2px 0 0;
    background: ${({ $color }) => $color};
`;

const LayerName = styled.span`
    flex: 1;
    display: flex;
    align-items: center;
    gap: 5px;
    padding-left: ${({ $depth }) => ($depth ? 26 : 3)}px;
    border: 1px solid #606060;
    border-width: 0 1px;
    font-size: 10px;
    font-weight: 500;
`;

const Twist = styled.span`
    width: 15px;
    display: flex;
    padding-left: 1px;
`;

const Target = styled.button`
    width: 36px;
    padding-left: 6px;
`;

const PanelCorner = styled.span`
    position: relative;

    &::after {
        content: '';
        position: absolute;
        right: 0;
        top: 0;
        border: 3px solid;
        border-color: #c8c8c8 #c8c8c8 transparent transparent;
    }
`;

const thumbs = {
    board: <><path d="M6 5h7v8H6z" fill="#595959" /><path d="M3 7h2v4H3zM14 7h2v4h-2z" fill="#888" /><path d="M6 3h7v1H6z" fill="#ccc" /></>,
    pale: <path d="M1 9h16v2H1z" fill="#eee" />,
    white: <path d="M1 8h16v2H1z" fill="#f6f6f6" />,
    slider: <path d="M1 10h16v2H1z" fill="#595959" />,
    modes: <><path d="M15 3h2v2h-2zM15 6h2v2h-2zM15 9h2v2h-2zM15 12h2v2h-2z" fill="#333" /><path d="M3 4h11v1H3zM3 7h11v1H3zM3 10h11v1H3z" fill="#eee" /></>,
    faint: <path d="M5 8h8v1H5zM1 11h2v1H1z" fill="#ddd" />,
    tall: <path d="M3 1h12v16H3z" fill="#595959" />,
    keys: <><path d="M2 1h14v16H2z" fill="#595959" /><path d="M6 2v14M10 3v13M12.500 3v11" stroke="#ddd" strokeDasharray="2 1" /></>,
    dark: <path d="M1 1h16v16H1z" fill="#595959" />,
    line: <path d="M1 9.500h16" stroke="#333" strokeWidth="1.500" strokeDasharray="3 .5" />,
    gray: <path d="M1 4h16v11H1z" fill="#f0f0f0" />,
    pink: <path d="M4 1h10v16H4z" fill="#ffe0e0" />,
};

const Thumbnail = ({ kind, text }) => (
    <Icon w={18} h={18} stroke="none">
        <path d="M.5.5h17v17H.5z" fill="#fff" stroke="#000" />
        {text
            ? <text x="9" y="11" textAnchor="middle" fontSize="6" fontWeight="700" fill="#444">{text}</text>
            : thumbs[kind]}
    </Icon>
);

const Footer = styled.div`
    flex: none;
    display: flex;
    align-items: center;
    height: 19px;
    padding: 0 28px 0 5px;
    color: #c8c8c8;
    font-size: 10px;
    font-weight: 500;
`;

const FooterIcons = styled.div`
    flex: 1;
    display: flex;
    justify-content: space-between;
    margin-left: 14px;
`;

const Panels = () => (
    <Dock>
        <PaneHead $end><Doubles right /></PaneHead>
        <TabBar>
            <Tab $w={35}>Color</Tab>
            <Tab $w={34}>Properties</Tab>
            <Tab $w={34}>Character</Tab>
            <SortMark>
                <Icon w={7} h={10} stroke="#a0a0a0"><path d="M1 4l2.500-3L6 4M1 6l2.500 3L6 6" /></Icon>
            </SortMark>
            <Tab $w={58} $active>Paragraph</Tab>
            <Tab $w={37}>OpenType</Tab>
            <TabMenu aria-label="Paragraph menu"><MenuLines /></TabMenu>
        </TabBar>
        <Section $h={38} $line $gap={11} $pad="0 0 0 3px">
            {alignments.map(([name, rows], i) => (
                <AlignButton key={name} aria-label={name} $active={i === 0}>
                    <Icon w={24} h={24} stroke={i === 0 ? '#fff' : g} shapeRendering="crispEdges">
                        {rows.map(([a, b], n) => <path key={n} d={`M${a + (i ? 0 : 1)} ${5.5 + n * 3}H${b + (i ? 0 : 1)}`} />)}
                    </Icon>
                </AlignButton>
            ))}
        </Section>
        <Section $h={38} $line $gap={5} $pad="0 0 0 6px">
            <Icon w={15} h={14}>
                <circle cx="2" cy="3" r="1.600" fill={g} /><circle cx="2" cy="11" r="1.600" fill={g} />
                <path d="M5 1.500h10M5 4.500h10M5 9.500h10M5 12.500h10" />
            </Icon>
            <Chevron />
            <Icon w={18} h={14}>
                <text x="1" y="6" fontSize="8" fontWeight="700" fill={g} stroke="none">1</text>
                <text x="1" y="14" fontSize="8" fontWeight="700" fill={g} stroke="none">2</text>
                <path d="M7 1.500h10M7 4.500h10M7 9.500h10M7 12.500h10" />
            </Icon>
            <Chevron />
        </Section>
        <Section $h={31} $spread $pad="0 0 0 1px">
            <PointField name="Left indent" />
            <PointField name="Right indent" />
        </Section>
        <Section $h={28} $line $pad="0 0 5px 1px">
            <PointField name="First line indent" />
        </Section>
        <Section $h={33} $line $spread $pad="0 0 0 1px">
            <PointField name="Space before" />
            <PointField name="Space after" />
        </Section>
        <Section $h={25} $pad="0 0 0 1px">
            <Hyphenate><input type="checkbox" defaultChecked />Hyphenate</Hyphenate>
        </Section>
        <Gap $h={3} />
        <Tabs items={[['Swatches', 63], ['Brushes', 54], ['Symbols', 59]]} active="Swatches" />
        <Gap $h={3} />
        <Tabs items={[['Layers', 48], ['Libraries', 51], ['Stroke', 43], ['Transparency', 69]]} active="Layers" />
        <LayerPanel>
            <SearchRow>
                <SearchBox>
                    <FaSearch size={12} />
                    <input type="search" placeholder="Search All" aria-label="Search layers" />
                </SearchBox>
                <IconButton aria-label="Filter layers">
                    <Icon w={13} h={14} stroke="none" fill={g}><path d="M0 0h13L8.500 7v4.500L5 14V7z" /></Icon>
                </IconButton>
            </SearchRow>
            <ul>
                {layers.map((l, i) => (
                    <LayerRow key={i} $selected={l.selected}>
                        <LayerCell $w={21}>
                            <Icon w={12} h={8} stroke="none">
                                <path d="M0 4c3-5 9-5 12 0-3 5-9 5-12 0z" fill={g} />
                                <circle cx="6" cy="4" r="2.300" stroke="#535353" />
                            </Icon>
                        </LayerCell>
                        <LayerCell $w={22}>{l.locked && <FaLock size={10} color={g} />}</LayerCell>
                        <LayerColor $color={l.color || '#ff5050'} />
                        <LayerName $depth={l.depth}>
                            <Twist>
                                {l.open && <Chevron />}
                                {l.group && <Chevron dir="right" />}
                            </Twist>
                            <Thumbnail kind={l.thumb} text={l.text} />
                            {l.name}
                        </LayerName>
                        <Target aria-label={`Target ${l.name}`}>
                            <Icon w={9} h={9}><circle cx="4.500" cy="4.500" r="3.500" fill={l.filled ? '#8c8c8c' : 'none'} strokeWidth="1.200" /></Icon>
                        </Target>
                        {l.selected && <PanelCorner />}
                    </LayerRow>
                ))}
            </ul>
        </LayerPanel>
        <Footer>
            2 Layers
            <FooterIcons>
                <Icon w={14} h={12}><path d="M2.500 0v12M0 1.500h12M10.500 0v5M0 9.500h7" /><path d="M8 5h5v7l-2.500-2L8 12z" fill={g} stroke="none" /></Icon>
                <Icon w={12} h={12}><path d="M5 1.500H.5v10h10V7M6 6l5-5M7.500.5h4v4" /></Icon>
                <Icon w={12} h={12} stroke="#747474"><circle cx="4.500" cy="4.500" r="3.800" /><path d="M7.500 7.500L11.500 11.500" strokeWidth="2" /></Icon>
                <Icon w={12} h={12}><path d="M4.500 4.500h7v7h-7z" stroke="#888" /><path d="M.5.5h8v8h-8z" /><path d="M3 3h5v5H3z" fill={g} stroke="none" /></Icon>
                <Icon w={16} h={12}><path d="M5.500 1.500h10v10h-10zM10.500 4v5M8 6.500h5M.5 0v4.500H4M2.500 2.500l2 2-2 2" /></Icon>
                <Icon w={12} h={12}><path d="M.5.5h11v11H.5zM6 3v6M3 6h6" /></Icon>
                <Icon w={12} h={13}><path d="M0 2.500h12M4 2V.5h4V2M1.500 3v9.500h9V3M4.500 5v6M6.500 5v6M8.500 5v6" /></Icon>
            </FooterIcons>
        </Footer>
    </Dock>
);

const stars = [[1, 20], [3, 188], [2, 246], [6, 304], [6, 323], [4, 419], [7, 478], [4, 571], [1, 618], [7, 733], [6, 779]];

const App = () => (
    <Screen>
        <GlobalStyle />
        <AppWindow>
            <TopHeader />
            <Body>
                <Tools />
                <Document />
                <Panels />
            </Body>
            <AssetExport />
        </AppWindow>
        <Desktop>
            <DesktopBand $h={50} $bg="#2a2a2a" />
            <DesktopBand $h={58} $bg="#3c3c3c" $round />
            <DesktopBand $h={40} $bg="#232425" />
            <Icon w={8} h={900} stroke="none" fill="#dfe6ea">
                {stars.map(([x, y]) => <circle key={y} cx={x} cy={y} r="1" />)}
            </Icon>
        </Desktop>
    </Screen>
);

export default App;
